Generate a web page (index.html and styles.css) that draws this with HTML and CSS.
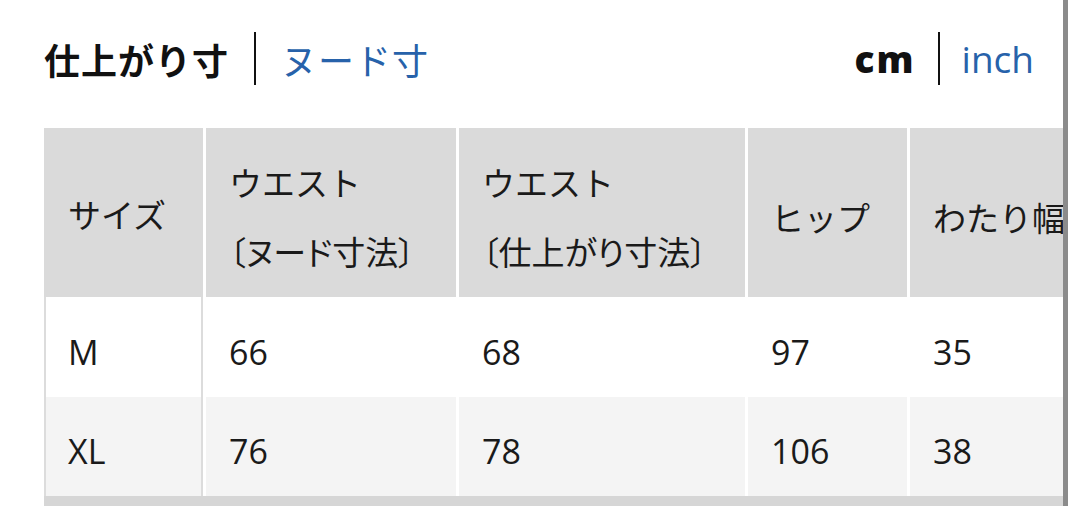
FILE: index.html
```html
<!DOCTYPE html>
<html lang="ja">
<head>
<meta charset="utf-8">
<title>サイズ表</title>
<link rel="stylesheet" href="styles.css">
</head>
<body>
<div class="page">
  <div class="tabs">
    <div class="group">
      <span class="tab active">仕上がり寸</span>
      <span class="sep"></span>
      <span class="tab link">ヌード寸</span>
    </div>
    <div class="group">
      <span class="unit active">cm</span>
      <span class="sep"></span>
      <span class="unit link">inch</span>
    </div>
  </div>
  <div class="table-wrap">
    <table class="sizes">
      <colgroup>
        <col class="c1"><col class="c2"><col class="c3"><col class="c4"><col class="c5">
      </colgroup>
      <thead>
        <tr>
          <th>サイズ</th>
          <th class="two">ウエスト<br><span class="paren">〔ヌード寸法〕</span></th>
          <th class="two">ウエスト<br><span class="paren">〔仕上がり寸法〕</span></th>
          <th>ヒップ</th>
          <th>わたり幅</th>
        </tr>
      </thead>
      <tbody>
        <tr class="odd">
          <td class="size">M</td><td>66</td><td>68</td><td>97</td><td>35</td>
        </tr>
        <tr class="even">
          <td class="size">XL</td><td>76</td><td>78</td><td>106</td><td>38</td>
        </tr>
      </tbody>
    </table>
    <div class="hscroll"></div>
  </div>
  <div class="vscroll"></div>
</div>
</body>
</html>
```
FILE: styles.css
```css
html, body {
  margin: 0;
  padding: 0;
  background: #fff;
  overflow: hidden;
}

.page {
  position: relative;
  width: 1080px;
  height: 506px;
  padding-top: 32px;
  box-sizing: border-box;
  font-family: "Noto Sans CJK JP", "Noto Sans", sans-serif;
  color: #1a1a1a;
}

.tabs {
  display: flex;
  justify-content: space-between;
  align-items: center;
  margin: 0 46px 0 44px;
  height: 53px;
}

.group {
  display: flex;
  align-items: center;
  height: 53px;
}

.sep {
  display: block;
  width: 2px;
  height: 53px;
  background: #111;
  margin: 0 25px;
}

.tab {
  font-size: 36px;
  letter-spacing: 1px;
  line-height: 1;
}

.tab.active {
  font-weight: 700;
  color: #111;
}

.link {
  color: #2762aa;
}

.unit {
  font-family: "Open Sans", "Noto Sans", sans-serif;
  font-size: 37px;
  line-height: 1;
}

.unit.active {
  font-weight: 800;
  color: #111;
  letter-spacing: 2px;
}

.group .unit + .sep {
  margin: 0 22px;
}

.table-wrap {
  margin: 43px 0 0 44px;
  width: 1019px;
  overflow: hidden;
}

.sizes {
  table-layout: fixed;
  width: 1056px;
  border-collapse: separate;
  border-spacing: 0;
}

.c1 { width: 162px; }
.c2 { width: 253px; }
.c3 { width: 289px; }
.c4 { width: 162px; }
.c5 { width: 190px; }

.sizes th,
.sizes td {
  border-right: 3px solid #fff;
  padding: 0 0 0 23px;
  text-align: left;
  vertical-align: middle;
  white-space: nowrap;
}

.sizes th {
  height: 160px;
  background: #dadada;
  font-weight: 400;
  font-size: 33px;
  line-height: 69px;
  color: #1a1a1a;
  padding-top: 9px;
}

.sizes th:first-child {
  padding-left: 24px;
  padding-top: 4px;
}

.paren {
  font-feature-settings: "palt";
}

.sizes td {
  font-family: "Open Sans", "Noto Sans", sans-serif;
  font-size: 34px;
  color: #1a1a1a;
  padding-top: 9px;
}

.odd td {
  height: 91px;
  background: #fff;
}

.even td {
  height: 90px;
  background: #f4f4f4;
}

.sizes td.size {
  padding-left: 24px;
  box-shadow: inset 2px 0 #dcdcdc, inset -2px 0 #dcdcdc;
}

.hscroll {
  height: 10px;
  background: #d6d6d6;
}

.vscroll {
  position: absolute;
  top: 0;
  left: 1063px;
  width: 5px;
  height: 506px;
  background: #8b8b8b;
}
```
